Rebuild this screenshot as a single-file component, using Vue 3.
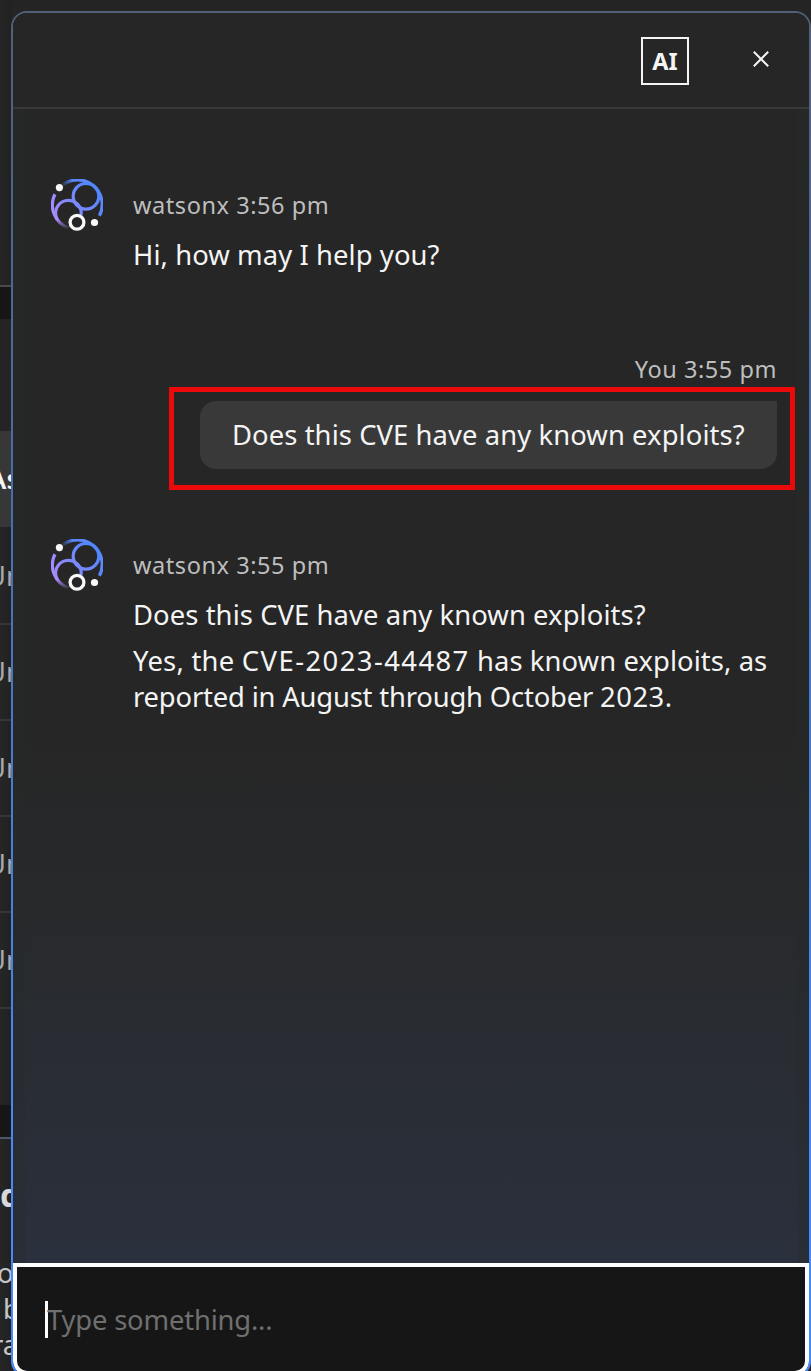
<script setup>
const rows = [1, 2, 3, 4, 5]
const replies = [
  { time: 'watsonx 3:56 pm', key: 'first', lines: [{ parts: [{ text: 'Hi, how may I help you?', cls: 'even' }], cls: 'greeting' }] },
  {
    time: 'watsonx 3:55 pm', key: 'second',
    lines: [
      { parts: [{ text: 'Does this CVE have any known exploits?', cls: 'even' }], cls: 'question' },
      { parts: [{ text: 'Yes, the ', cls: 'loose' }, { text: 'CVE-2023-44487', cls: 'id' }, { text: ' has known exploits, as', cls: 'even' }], cls: 'answer' },
      { parts: [{ text: 'reported in August through October ', cls: 'tight' }, { text: '2023.', cls: 'year' }], cls: 'answer' },
    ],
  },
]
</script>

<template>
  <div class="page">
    <aside class="behind">
      <div class="top-space"></div>
      <div class="dark-band"></div>
      <div class="toolbar"></div>
      <div class="cell head"><span>As</span></div>
      <div v-for="r in rows" :key="r" class="cell"><span>Un</span></div>
      <div class="table-end"></div>
      <div class="dark-band lower"></div>
      <div class="copy">
        <h3>d</h3>
        <p class="l1">o</p>
        <p class="l2">b</p>
        <p class="l3">ra</p>
      </div>
    </aside>

    <section class="panel">
      <div class="inner">
        <header>
          <div class="ai">AI</div>
          <svg class="close" width="16" height="16" viewBox="0 0 16 16"><path d="M.8.8l14.4 14.4M15.2.8L.8 15.2" stroke="#f4f4f4" stroke-width="2" fill="none" /></svg>
        </header>
        <main>
          <template v-for="m in replies" :key="m.key">
            <article class="reply" :class="m.key">
              <svg class="avatar" width="52" height="52" viewBox="0 0 52 52" fill="none">
                <defs>
                  <linearGradient :id="m.key + 'a'" x1="10" y1="4" x2="22" y2="1" gradientUnits="userSpaceOnUse">
                    <stop offset="0" stop-color="#4d7cf0" stop-opacity="0.1" /><stop offset="1" stop-color="#5a88ff" />
                  </linearGradient>
                  <linearGradient :id="m.key + 'b'" x1="8" y1="14" x2="18" y2="50" gradientUnits="userSpaceOnUse">
                    <stop offset="0" stop-color="#9a8dff" /><stop offset="0.65" stop-color="#ad8aff" /><stop offset="1" stop-color="#be95ff" stop-opacity="0" />
                  </linearGradient>
                  <linearGradient :id="m.key + 'c'" x1="6" y1="42" x2="44" y2="10" gradientUnits="userSpaceOnUse">
                    <stop offset="0" stop-color="#a78bfa" /><stop offset="1" stop-color="#4f87ff" />
                  </linearGradient>
                </defs>
                <g stroke-width="3.2">
                  <path :stroke="`url(#${m.key}a)`" d="M11.5 6A24.6 24.6 0 0 1 48.4 36.8" />
                  <path :stroke="`url(#${m.key}b)`" d="M3.9 15.2A24.6 24.6 0 0 0 18.5 49.4" />
                  <circle :stroke="`url(#${m.key}c)`" cx="35" cy="17.3" r="12.8" />
                  <path :stroke="`url(#${m.key}c)`" d="M6.3 40.5A12.8 12.8 0 1 1 30 36.5" />
                </g>
                <circle cx="26" cy="43.3" r="6.9" fill="#262626" stroke="#f8f8f8" stroke-width="3.3" />
                <circle cx="8.4" cy="8.6" r="3.6" fill="#f8f8f8" /><circle cx="43.5" cy="43.5" r="3.6" fill="#f8f8f8" />
              </svg>
              <div>
                <div class="meta">{{ m.time }}</div>
                <p v-for="(l, i) in m.lines" :key="i" :class="l.cls"><span v-for="p in l.parts" :key="p.text" :class="p.cls">{{ p.text }}</span></p>
              </div>
            </article>
            <article v-if="m.key === 'first'" class="mine">
              <div class="meta you">You 3:55 pm</div>
              <div class="highlight"><div class="bubble even">Does this CVE have any known exploits?</div></div>
            </article>
          </template>
        </main>
        <footer><i class="caret"></i><span class="placeholder">Type something...</span></footer>
      </div>
    </section>
  </div>
</template>

<style>
body { background: #242424; }
</style>

<style scoped>
* { box-sizing: border-box; margin: 0; }
.page { display: flex; width: 811px; height: 1371px; overflow: hidden; background: #242424; font-family: "Noto Sans", sans-serif; font-size: 27.4px; line-height: 36px; white-space: pre; color: #f4f4f4; }
.behind { width: 11px; flex: none; overflow: hidden; background: linear-gradient(90deg, #262626, #212121); }
.top-space { height: 285px; }
.dark-band { height: 34px; background: #161616; border-top: 2px solid #4a4a4a; }
.toolbar { height: 112px; background: #242424; }
.cell { height: 96px; display: flex; align-items: center; border-bottom: 2px solid #353535; color: #a8a8a8; }
.cell span { margin-left: -14px; }
.cell.head { margin-bottom: 2px; background: #373737; color: #f4f4f4; font-weight: 600; border: 0; }
.cell.head span { margin-left: -12px; }
.table-end { height: 96px; }
.dark-band.lower { border-top: 0; border-bottom: 2px solid #50566a; }
.copy { color: #c6c6c6; }
.copy h3 { font-size: 33px; line-height: 44px; margin: 34px 0 38px; color: #d8d8d8; }
.copy p { height: 36px; }
.copy .l1 { margin-left: -3px; }
.copy .l2 { margin-left: 3px; }
.copy .l3 { margin-left: -8px; }
.panel { width: 800px; height: 1366px; flex: none; margin-top: 11px; padding: 2px; border-radius: 16px; background: linear-gradient(#525f76, #4a6cae 35%, #4680dd 62%, #4589ff 85%); }
.inner { height: 1362px; border-radius: 14px; overflow: hidden; display: flex; flex-direction: column; background: linear-gradient(#262626 52%, #282a2d 68%, #2a303d 92%); }
header { height: 96px; flex: none; display: flex; border-bottom: 2px solid #393939; background: #262626; }
.ai { width: 48px; height: 48px; margin: 24px 0 0 628px; border: 2px solid #f4f4f4; text-align: center; font-size: 23.5px; font-weight: 700; line-height: 44px; }
.close { margin: 38px 0 0 64px; }
main { flex: 1; box-shadow: inset 14px 0 0 -2px rgba(40, 44, 42, .3), inset -14px 0 0 -2px rgba(40, 44, 42, .3); }
.reply { display: flex; padding-left: 38px; gap: 30px; }
.first { padding-top: 70px; height: 245px; }
.second { padding-top: 49px; }
.avatar { flex: none; }
.meta { height: 32px; flex: none; font-size: 23.5px; line-height: 32px; letter-spacing: .56px; color: #bebebe; }
.reply .meta { margin: 10px 0 16px; }
.reply p { height: 36px; }
.reply .question { margin-bottom: 10px; }
.even { letter-spacing: .08px; }
.loose { letter-spacing: .25px; }
.id { letter-spacing: 1.45px; }
.tight { letter-spacing: -.18px; }
.year { letter-spacing: .5px; }
.mine { height: 136px; display: flex; flex-direction: column; align-items: flex-end; }
.mine .you { margin: -1px 32px 2px 0; }
.highlight { width: 626px; height: 103px; flex: none; margin-right: 14px; padding: 9px 13px 0 26px; border: 5px solid #eb0909; }
.bubble { height: 68px; padding: 16px 0 0 32px; background: #393939; border-radius: 16px 0 16px 16px; }
footer { height: 112px; flex: none; display: flex; align-items: center; padding: 0 28px; border: 4px solid #fff; border-radius: 0 0 14px 14px; background: #161616; color: #6f6f6f; }
.caret { width: 3px; height: 37px; background: #fff; }
.placeholder { margin: 2px 0 0 -1px; letter-spacing: -.18px; }
</style>
